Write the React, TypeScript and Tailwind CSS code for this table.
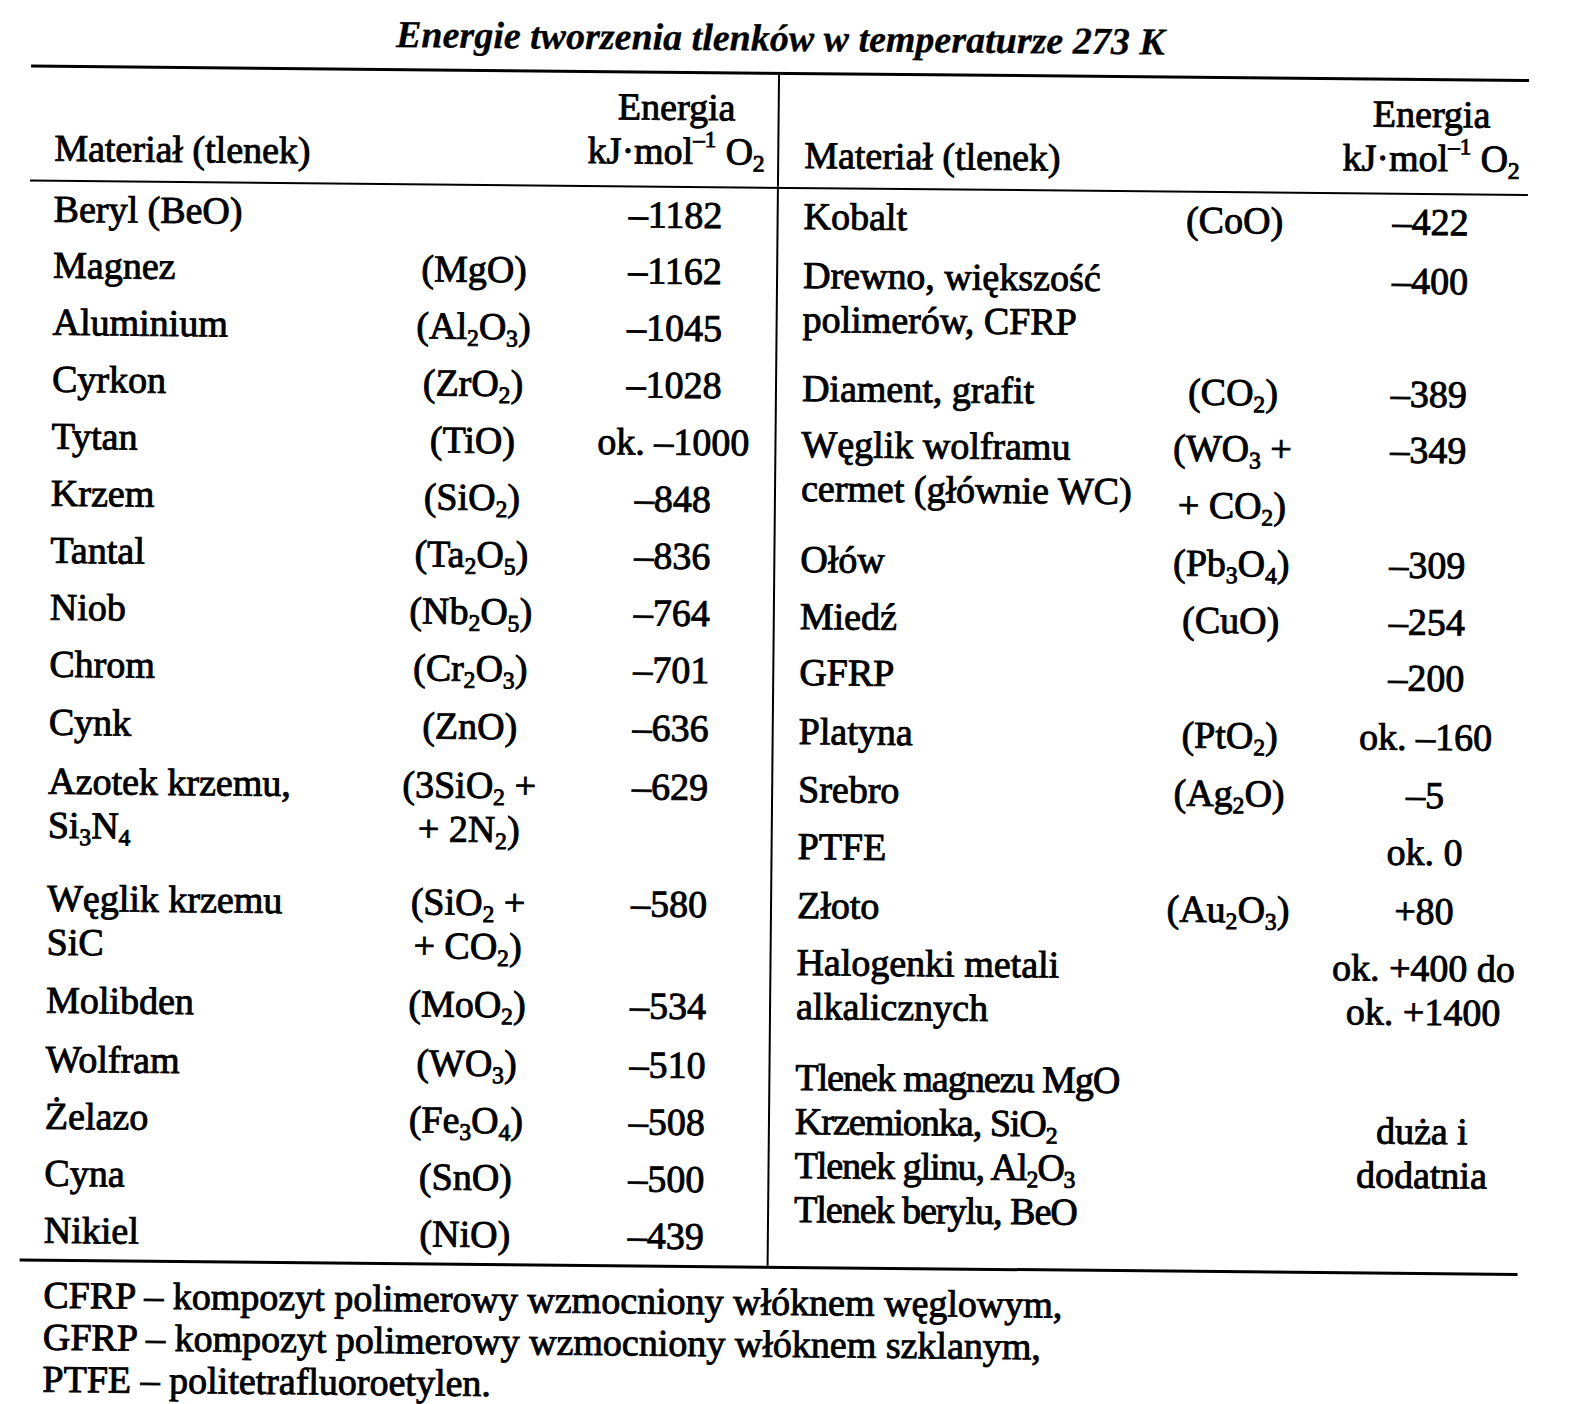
import type { ReactNode } from "react";

type Row = {
  h: string;
  name: ReactNode;
  formula?: ReactNode;
  energy?: ReactNode;
  energyPad?: string;
};

function Sub({ children }: { children: ReactNode }) {
  return <sub className="text-[0.62em] -bottom-[0.3em]">{children}</sub>;
}

const leftRows: Row[] = [
  { h: "h-[56px]", name: "Beryl (BeO)", energy: "–1182" },
  { h: "h-[57px]", name: "Magnez", formula: "(MgO)", energy: "–1162" },
  { h: "h-[57px]", name: "Aluminium", formula: <>(Al<Sub>2</Sub>O<Sub>3</Sub>)</>, energy: "–1045" },
  { h: "h-[57px]", name: "Cyrkon", formula: <>(ZrO<Sub>2</Sub>)</>, energy: "–1028" },
  { h: "h-[57px]", name: "Tytan", formula: "(TiO)", energy: "ok. –1000" },
  { h: "h-[57px]", name: "Krzem", formula: <>(SiO<Sub>2</Sub>)</>, energy: "–848" },
  { h: "h-[57px]", name: "Tantal", formula: <>(Ta<Sub>2</Sub>O<Sub>5</Sub>)</>, energy: "–836" },
  { h: "h-[57px]", name: "Niob", formula: <>(Nb<Sub>2</Sub>O<Sub>5</Sub>)</>, energy: "–764" },
  { h: "h-[58px]", name: "Chrom", formula: <>(Cr<Sub>2</Sub>O<Sub>3</Sub>)</>, energy: "–701" },
  { h: "h-[59px]", name: "Cynk", formula: "(ZnO)", energy: "–636" },
  {
    h: "h-[117px]",
    name: <>Azotek krzemu,<br />Si<Sub>3</Sub>N<Sub>4</Sub></>,
    formula: <>(3SiO<Sub>2</Sub> +<br />+ 2N<Sub>2</Sub>)</>,
    energy: "–629",
  },
  {
    h: "h-[102px]",
    name: <>Węglik krzemu<br />SiC</>,
    formula: <>(SiO<Sub>2</Sub> +<br />+ CO<Sub>2</Sub>)</>,
    energy: "–580",
  },
  { h: "h-[59px]", name: "Molibden", formula: <>(MoO<Sub>2</Sub>)</>, energy: "–534" },
  { h: "h-[57px]", name: "Wolfram", formula: <>(WO<Sub>3</Sub>)</>, energy: "–510" },
  { h: "h-[57px]", name: "Żelazo", formula: <>(Fe<Sub>3</Sub>O<Sub>4</Sub>)</>, energy: "–508" },
  { h: "h-[57px]", name: "Cyna", formula: "(SnO)", energy: "–500" },
  { h: "h-[56px]", name: "Nikiel", formula: "(NiO)", energy: "–439" },
];

const rightRows: Row[] = [
  { h: "h-[59px]", name: "Kobalt", formula: "(CoO)", energy: "–422" },
  { h: "h-[113px]", name: <>Drewno, większość<br />polimerów, CFRP</>, energy: "–400" },
  { h: "h-[56px]", name: "Diament, grafit", formula: <>(CO<Sub>2</Sub>)</>, energy: "–389" },
  {
    h: "h-[115px]",
    name: <>Węglik wolframu<br />cermet (głównie WC)</>,
    formula: (
      <>
        <div>(WO<Sub>3</Sub> +</div>
        <div className="mt-[13px]">+ CO<Sub>2</Sub>)</div>
      </>
    ),
    energy: "–349",
  },
  { h: "h-[57px]", name: "Ołów", formula: <>(Pb<Sub>3</Sub>O<Sub>4</Sub>)</>, energy: "–309" },
  { h: "h-[56px]", name: "Miedź", formula: "(CuO)", energy: "–254" },
  { h: "h-[59px]", name: "GFRP", energy: "–200" },
  { h: "h-[58px]", name: "Platyna", formula: <>(PtO<Sub>2</Sub>)</>, energy: "ok. –160" },
  { h: "h-[57px]", name: "Srebro", formula: <>(Ag<Sub>2</Sub>O)</>, energy: "–5" },
  { h: "h-[59px]", name: "PTFE", energy: "ok. 0" },
  { h: "h-[57px]", name: "Złoto", formula: <>(Au<Sub>2</Sub>O<Sub>3</Sub>)</>, energy: "+80" },
  { h: "h-[115px]", name: <>Halogenki metali<br />alkalicznych</>, energy: <>ok. +400 do<br />ok. +1400</> },
  {
    h: "flex-1",
    name: (
      <div className="tracking-[-1px]">
        Tlenek magnezu MgO
        <br />
        Krzemionka, SiO<Sub>2</Sub>
        <br />
        Tlenek glinu, Al<Sub>2</Sub>O<Sub>3</Sub>
        <br />
        Tlenek berylu, BeO
      </div>
    ),
    energy: <>duża i<br />dodatnia</>,
    energyPad: "pt-[48px]",
  },
];

function Header({ cols }: { cols: string }) {
  return (
    <div className={`grid ${cols} h-[112px]`}>
      <div className="pt-[58px] whitespace-nowrap">Materiał (tlenek)</div>
      <div />
      <div className="pt-[11px] text-center whitespace-nowrap">
        Energia
        <br />
        kJ·mol<sup className="text-[0.6em] -top-[0.75em]">–1</sup> O<Sub>2</Sub>
      </div>
    </div>
  );
}

function Body({ rows, cols }: { rows: Row[]; cols: string }) {
  return (
    <div className="flex flex-col h-full">
      {rows.map((r, i) => (
        <div key={i} className={`grid ${cols} ${r.h} pt-[5px]`}>
          <div className="whitespace-nowrap">{r.name}</div>
          <div className="text-center whitespace-nowrap">{r.formula}</div>
          <div className={`text-center whitespace-nowrap ${r.energyPad ?? ""}`}>{r.energy}</div>
        </div>
      ))}
    </div>
  );
}

export default function App() {
  return (
    <div className="w-[1596px] h-[1404px] bg-white overflow-hidden">
      <div className="w-[1596px] h-[1404px] rotate-[0.55deg] font-['Liberation_Serif',serif] text-[38px] leading-[44px] text-black [-webkit-text-stroke:0.9px_#000]">
        <div className="ml-[25px] w-[1498px]">
          {/* title */}
          <div className="h-[72px] pt-[16px] text-center italic font-bold [-webkit-text-stroke:0.3px_#000]">
            Energie tworzenia tlenków w temperaturze 273 K
          </div>

          {/* table */}
          <div className="border-t-[3px] border-b-[3px] border-black">
            <div className="flex border-b-2 border-black">
              <div className="w-[747px] pl-[24px]">
                <Header cols="grid-cols-[321px_200px_202px]" />
              </div>
              <div className="w-[751px] pl-[25px] border-l-2 border-black">
                <Header cols="grid-cols-[332px_198px_194px]" />
              </div>
            </div>
            <div className="flex h-[1077px]">
              <div className="w-[747px] pl-[24px]">
                <Body rows={leftRows} cols="grid-cols-[321px_200px_202px]" />
              </div>
              <div className="w-[751px] pl-[25px] border-l-2 border-black">
                <Body rows={rightRows} cols="grid-cols-[332px_198px_194px]" />
              </div>
            </div>
          </div>

          {/* footnotes */}
          <div className="pt-[12px] pl-[24px] leading-[42px]">
            <div>CFRP – kompozyt polimerowy wzmocniony włóknem węglowym,</div>
            <div>GFRP – kompozyt polimerowy wzmocniony włóknem szklanym,</div>
            <div>PTFE – politetrafluoroetylen.</div>
          </div>
        </div>
      </div>
    </div>
  );
}
